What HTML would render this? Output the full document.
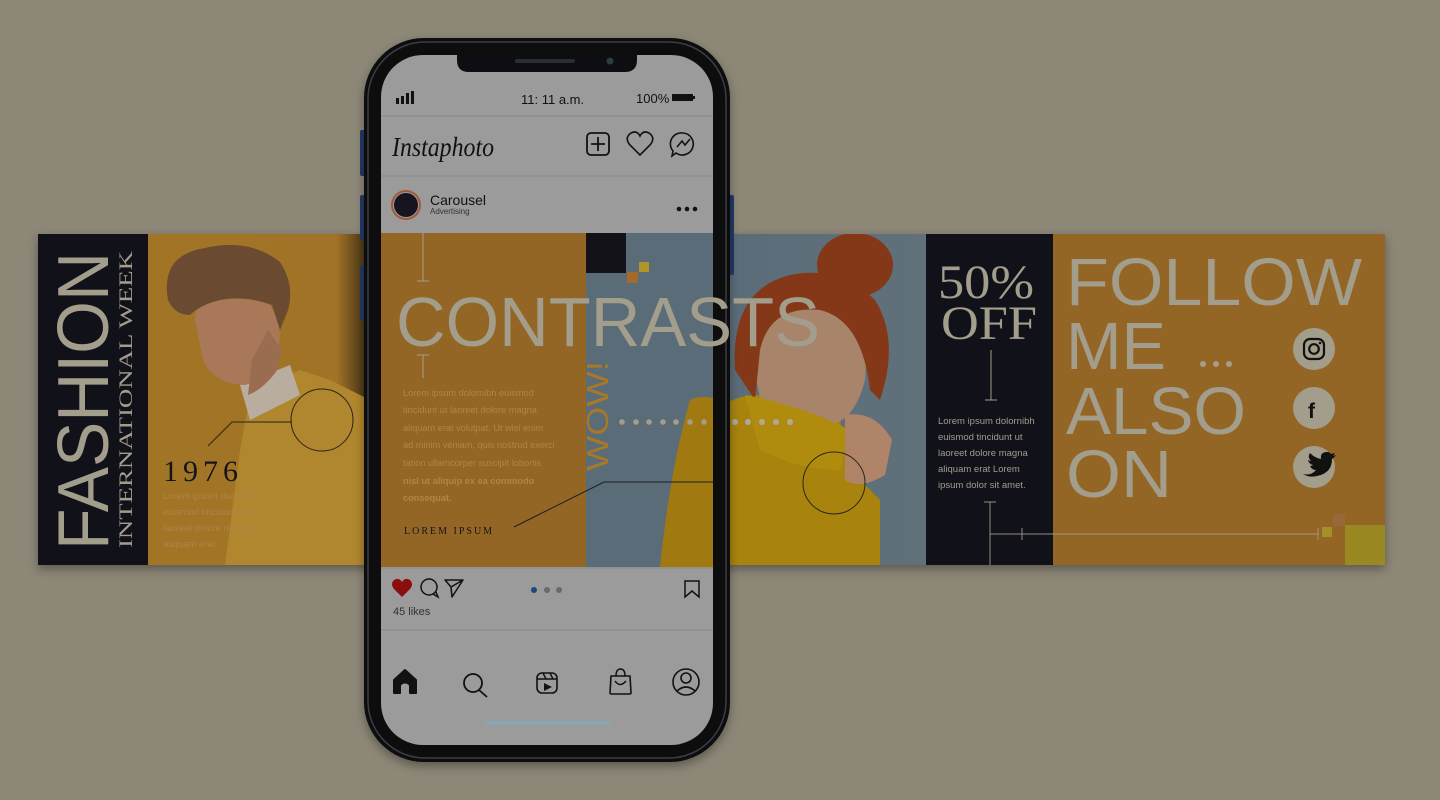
<!DOCTYPE html>
<html><head><meta charset="utf-8"><style>
html,body{margin:0;padding:0;background:#8d8777;width:1440px;height:800px;overflow:hidden}
svg{display:block}
</style></head><body>
<svg width="1440" height="800" viewBox="0 0 1440 800" xmlns="http://www.w3.org/2000/svg" font-family="Liberation Sans, sans-serif">
<defs>
<linearGradient id="lo" x1="0" x2="1"><stop offset="0" stop-color="#a27426"/><stop offset="0.85" stop-color="#a07326"/><stop offset="1" stop-color="#3a2a14"/></linearGradient>
<linearGradient id="bl" x1="0" x2="1"><stop offset="0" stop-color="#5a6c78"/><stop offset="1" stop-color="#60717b"/></linearGradient>
<filter id="sh" x="-10%" y="-10%" width="120%" height="130%"><feDropShadow dx="0" dy="4" stdDeviation="5" flood-color="#000" flood-opacity="0.35"/></filter>
<clipPath id="lc"><rect x="148" y="234" width="222" height="331"/></clipPath>
<clipPath id="rc"><rect x="713" y="234" width="213" height="331"/></clipPath>
</defs>
<rect width="1440" height="800" fill="#8d8777"/>
<g filter="url(#sh)">
<rect x="38" y="234" width="1347" height="331" fill="#a27426"/>
</g>
<rect x="38" y="234" width="110" height="331" fill="#11111a"/>
<rect x="148" y="234" width="222" height="331" fill="url(#lo)"/>
<g clip-path="url(#lc)">
 <path d="M250 395 L300 370 L330 380 L370 400 L370 565 L225 565 L240 450 Z" fill="#b0862e"/>
 <path d="M240 385 L290 365 L300 395 L250 420 Z" fill="#b8ad9e"/>
 <path d="M195 320 Q195 300 215 298 L265 300 Q285 320 278 350 Q270 380 245 385 Q215 385 203 360 Z" fill="#a87858"/>
 <path d="M268 330 L282 350 L276 372 Q262 390 248 395 L252 360 Z" fill="#9a6c50"/>
 <path d="M168 300 Q160 255 205 248 Q250 238 280 262 Q295 285 288 310 L280 330 L272 305 Q245 295 220 300 Q200 305 190 315 Q175 315 168 300 Z" fill="#6a4a30"/>
 <circle cx="322" cy="420" r="31" fill="none" stroke="#2a2418" stroke-width="1"/>
 <path d="M208 446 L232 422 L292 422" fill="none" stroke="#2a2418" stroke-width="1"/>
</g>
<text transform="translate(108,550) rotate(-90)" font-size="72" fill="#a39d8c" textLength="298" lengthAdjust="spacingAndGlyphs">FASHION</text>
<text transform="translate(132,548) rotate(-90)" font-size="19" fill="#a39d8c" font-family="Liberation Serif, serif" textLength="297" lengthAdjust="spacingAndGlyphs">INTERNATIONAL WEEK</text>
<text x="163" y="481" font-size="30" fill="#14141c" font-family="Liberation Serif, serif" letter-spacing="5">1976</text>
<g font-size="9.5" fill="#b0874a" opacity="0.9">
<text x="163" y="499">Lorem ipsum dolornibh</text>
<text x="163" y="515">euismod tincidunt ut</text>
<text x="163" y="531">laoreet dolore magna</text>
<text x="163" y="547">aliquam erat</text>
</g>
<rect x="713" y="234" width="213" height="331" fill="url(#bl)"/>
<g clip-path="url(#rc)">
 <path d="M700 430 Q720 395 760 395 L840 420 L850 470 L880 500 L880 565 L700 565 Z" fill="#a8840f"/>
 <path d="M760 300 Q800 280 840 300 Q870 330 865 380 Q855 420 830 425 L770 420 Q752 390 755 340 Z" fill="#a8846a"/>
 <path d="M735 370 Q730 290 790 275 Q840 265 875 300 Q900 340 880 400 L870 390 Q862 320 820 310 Q770 305 760 350 L755 400 Z" fill="#843818"/>
 <ellipse cx="855" cy="265" rx="38" ry="32" fill="#843818"/>
 <path d="M745 395 Q800 405 850 430 L840 470 Q800 470 760 450 Z" fill="#b08c0e"/>
 <path d="M845 415 Q875 410 892 440 L885 475 Q860 490 845 480 Z" fill="#b08468"/>
 <circle cx="834" cy="483" r="31" fill="none" stroke="#2a2418" stroke-width="1"/>
 <g fill="#b0a898"><circle cx="762" cy="422" r="3"/><circle cx="776" cy="422" r="3"/><circle cx="790" cy="422" r="3"/><circle cx="735" cy="422" r="3"/><circle cx="748" cy="422" r="3"/><circle cx="722" cy="422" r="3"/></g>
</g>
<rect x="926" y="234" width="127" height="331" fill="#11111a"/>
<rect x="1053" y="234" width="332" height="331" fill="#946626"/>
<text x="938" y="298" font-size="48" fill="#a39d8c" font-family="Liberation Serif, serif" textLength="96" lengthAdjust="spacingAndGlyphs">50%</text>
<text x="941" y="339" font-size="48" fill="#a39d8c" font-family="Liberation Serif, serif" textLength="96" lengthAdjust="spacingAndGlyphs">OFF</text>
<path d="M991 350 V400 M985 400 H997" stroke="#a39d8c" stroke-width="1"/>
<g font-size="9.5" fill="#a39d8c">
<text x="938" y="424">Lorem ipsum dolornibh</text>
<text x="938" y="440">euismod tincidunt ut</text>
<text x="938" y="456">laoreet dolore magna</text>
<text x="938" y="472">aliquam erat Lorem</text>
<text x="938" y="488">ipsum dolor sit amet.</text>
</g>
<path d="M984 502 H996 M990 502 V565 M990 534 H1318 M1022 528 V540 M1318 528 V540" stroke="#a39d8c" stroke-width="1" opacity="0.9"/>
<g font-size="67" fill="#a39d8c">
<text x="1066" y="305" textLength="296" lengthAdjust="spacingAndGlyphs">FOLLOW</text>
<text x="1066" y="369" textLength="100" lengthAdjust="spacingAndGlyphs">ME</text>
<text x="1066" y="434" textLength="180" lengthAdjust="spacingAndGlyphs">ALSO</text>
<text x="1066" y="497" textLength="106" lengthAdjust="spacingAndGlyphs">ON</text>
</g>
<g fill="#a39d8c"><circle cx="1203" cy="364" r="3"/><circle cx="1216" cy="364" r="3"/><circle cx="1229" cy="364" r="3"/></g>
<g>
<circle cx="1314" cy="349" r="21" fill="#a39d8c"/>
<rect x="1304" y="339" width="20" height="20" rx="6" fill="none" stroke="#111" stroke-width="2.2"/>
<circle cx="1314" cy="349" r="4.8" fill="none" stroke="#111" stroke-width="2.2"/>
<circle cx="1320" cy="343" r="1.3" fill="#111"/>
<circle cx="1314" cy="408" r="21" fill="#a39d8c"/>
<text x="1308" y="418" font-size="21" font-weight="bold" fill="#111">f</text>
<circle cx="1314" cy="467" r="21" fill="#a39d8c"/>
<path d="M1303 474 Q1311 476 1316 470 Q1312 470 1310 466 Q1312 466 1313 465 Q1309 464 1308 460 Q1310 461 1311 461 Q1307 457 1310 453 Q1315 458 1321 459 Q1320 452 1327 452 Q1330 452 1331 454 L1335 453 L1333 456 L1336 455 Q1334 458 1332 459 Q1332 473 1317 476 Q1309 478 1303 474 Z" fill="#111"/>
</g>
<rect x="1345" y="525" width="40" height="40" fill="#9a8822"/>
<rect x="1333" y="514" width="12" height="12" fill="#976838"/>
<rect x="1322" y="527" width="10" height="10" fill="#a68e2a"/>

<rect x="360" y="130" width="6" height="46" rx="2" fill="#233a66"/>
<rect x="360" y="195" width="6" height="46" rx="2" fill="#233a66"/>
<rect x="360" y="265" width="6" height="56" rx="2" fill="#233a66"/>
<rect x="728" y="195" width="6" height="80" rx="2" fill="#233a66"/>
<rect x="364" y="38" width="366" height="724" rx="60" fill="#0c0e11" filter="url(#sh)"/>
<rect x="368" y="42" width="358" height="716" rx="57" fill="none" stroke="#3a3e44" stroke-width="1.5"/>
<rect x="381" y="55" width="332" height="690" rx="42" fill="#9b9b9b"/>
<path d="M457 55 H637 V60 Q637 72 625 72 H469 Q457 72 457 60 Z" fill="#0c0e11"/>
<rect x="515" y="59" width="60" height="4" rx="2" fill="#2a2d32"/>
<circle cx="610" cy="61" r="3.5" fill="#2e3a44"/>
<g fill="#111"><rect x="396" y="98" width="3" height="6"/><rect x="401" y="96" width="3" height="8"/><rect x="406" y="93" width="3" height="11"/><rect x="411" y="91" width="3" height="13"/></g>
<text x="521" y="104" font-size="13" fill="#111">11: 11 a.m.</text>
<text x="636" y="103" font-size="13" fill="#111">100%</text>
<rect x="672" y="94" width="21" height="7" fill="#111"/><rect x="693" y="96" width="2" height="3" fill="#111"/>
<line x1="381" y1="116" x2="713" y2="116" stroke="#8a8a8a"/>
<text x="392" y="156" font-size="27" font-style="italic" font-family="Liberation Serif, serif" fill="#111" textLength="102" lengthAdjust="spacingAndGlyphs">Instaphoto</text>
<rect x="587" y="133" width="22" height="22" rx="4" fill="none" stroke="#111" stroke-width="1.8"/>
<path d="M598 137 V151 M591 144 H605" stroke="#111" stroke-width="1.8"/>
<path d="M640 155 L630 145 Q624 138 631 133 Q637 130 640 136 Q643 130 649 133 Q656 138 650 145 Z" fill="none" stroke="#111" stroke-width="1.6"/>
<path d="M683 133 A11 11 0 1 1 676 153 L672 156 L673 151 A11 11 0 0 1 683 133 Z" fill="none" stroke="#111" stroke-width="1.6"/>
<path d="M677 147 L682 141 L685 145 L690 139" fill="none" stroke="#111" stroke-width="1.6"/>
<line x1="381" y1="176" x2="713" y2="176" stroke="#8a8a8a"/>
<circle cx="406" cy="205" r="15" fill="#a05a3a"/>
<circle cx="406" cy="205" r="13" fill="#9b9b9b"/>
<circle cx="406" cy="205" r="12" fill="#15141f"/>
<text x="430" y="205" font-size="14" fill="#111">Carousel</text>
<text x="430" y="214" font-size="8" fill="#333">Advertising</text>
<g fill="#111"><circle cx="679" cy="209" r="2.3"/><circle cx="687" cy="209" r="2.3"/><circle cx="695" cy="209" r="2.3"/></g>
<rect x="381" y="233" width="205" height="334" fill="#946626"/>
<rect x="586" y="233" width="127" height="334" fill="#5a6c78"/>
<path d="M690 400 Q700 395 713 398 V567 L660 567 Q670 470 690 400 Z" fill="#a07a10"/>
<rect x="586" y="233" width="40" height="40" fill="#121218"/>
<rect x="639" y="262" width="10" height="10" fill="#b09628"/>
<rect x="627" y="272" width="11" height="11" fill="#a36a2c"/>
<path d="M423 233 V281 M417 281 H429 M423 355 V378 M417 355 H429" stroke="#a39d8c" stroke-width="1"/>
<text x="396" y="346" font-size="70" fill="#a39d8c" textLength="424" lengthAdjust="spacingAndGlyphs">CONTRASTS</text>
<text transform="translate(608,471) rotate(-90)" font-size="31" fill="#a67828" textLength="110" lengthAdjust="spacingAndGlyphs">WOW!</text>
<g fill="#a39d8c"><circle cx="622" cy="422" r="2.8"/><circle cx="636" cy="422" r="2.8"/><circle cx="649" cy="422" r="2.8"/><circle cx="663" cy="422" r="2.8"/><circle cx="676" cy="422" r="2.8"/><circle cx="690" cy="422" r="2.8"/><circle cx="704" cy="422" r="2.8"/></g>
<g font-size="9.2" fill="#ad8648">
<text x="403" y="396">Lorem ipsum dolornibh euismod</text>
<text x="403" y="413">tincidunt ut laoreet dolore magna</text>
<text x="403" y="431">aliquam erat volutpat. Ut wisi enim</text>
<text x="403" y="448">ad minim veniam, quis nostrud exerci</text>
<text x="403" y="466">tation ullamcorper suscipit lobortis</text>
<text x="403" y="484" font-weight="bold">nisl ut aliquip ex ea commodo</text>
<text x="403" y="501" font-weight="bold">consequat.</text>
</g>
<text x="404" y="534" font-size="10" fill="#15141a" font-family="Liberation Serif, serif" letter-spacing="2">LOREM IPSUM</text>
<path d="M514 527 L604 482 L713 482" fill="none" stroke="#1e1e22" stroke-width="1"/>
<line x1="381" y1="568" x2="713" y2="568" stroke="#8a8a8a"/>
<path d="M402 597 L394 589 Q390 584 394 580 Q399 577 402 582 Q405 577 410 580 Q414 584 410 589 Z" fill="#8b0d0d"/>
<circle cx="429" cy="587" r="8" fill="none" stroke="#111" stroke-width="1.5"/>
<path d="M433 594 L438 597 L436 592" fill="none" stroke="#111" stroke-width="1.5"/>
<path d="M445 580 L463 580 L452 597 L451 587 Z M451 587 L463 580" fill="none" stroke="#111" stroke-width="1.5" stroke-linejoin="round"/>
<circle cx="534" cy="590" r="3" fill="#1a4a7a"/><circle cx="547" cy="590" r="3" fill="#6a6a6a"/><circle cx="559" cy="590" r="3" fill="#6a6a6a"/>
<path d="M685 581 H699 V597 L692 591 L685 597 Z" fill="none" stroke="#111" stroke-width="1.5"/>
<text x="393" y="615" font-size="11" fill="#333">45 likes</text>
<line x1="381" y1="630" x2="713" y2="630" stroke="#8a8a8a"/>
<path d="M394 693 V680 L405 670 L416 680 V693 H410 V685 Q405 680 400 685 V693 Z" fill="#111" stroke="#111" stroke-width="2" stroke-linejoin="round"/>
<circle cx="473" cy="683" r="9" fill="none" stroke="#111" stroke-width="1.8"/>
<path d="M479 690 L487 697" stroke="#111" stroke-width="1.8"/>
<rect x="537" y="673" width="20" height="20" rx="5" fill="none" stroke="#111" stroke-width="1.6"/>
<path d="M537 679 H557 M543 673 L546 679 M550 673 L553 679" stroke="#111" stroke-width="1.4"/>
<path d="M544 683 L552 687 L544 691 Z" fill="#111"/>
<path d="M611 676 H630 L631 693 Q631 694 629 694 H612 Q610 694 610 693 Z" fill="none" stroke="#111" stroke-width="1.6" stroke-linejoin="round"/>
<path d="M616 676 Q616 669 620.5 669 Q625 669 625 676 M615 681 Q620 688 626 681" fill="none" stroke="#111" stroke-width="1.5"/>
<circle cx="686" cy="682" r="13" fill="none" stroke="#111" stroke-width="1.6"/>
<circle cx="686" cy="678" r="5" fill="none" stroke="#111" stroke-width="1.6"/>
<path d="M677 691 Q686 683 695 691" fill="none" stroke="#111" stroke-width="1.6"/>
<rect x="484" y="721" width="127" height="4" rx="2" fill="#88a6b2"/>
</svg>
</body></html>
